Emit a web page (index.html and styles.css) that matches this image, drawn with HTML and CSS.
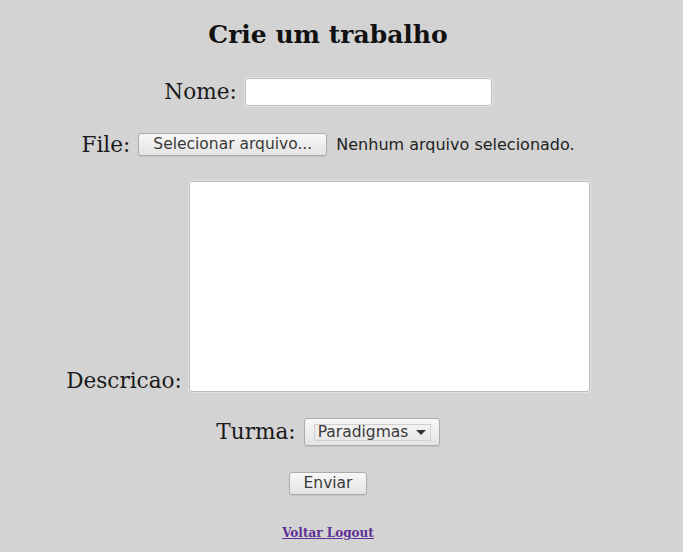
FILE: index.html
```html
<!DOCTYPE html>
<html lang="pt">
<head>
<meta charset="utf-8">
<title>Crie um trabalho</title>
<link rel="stylesheet" href="styles.css">
</head>
<body>
<main class="page">
  <h1 class="title">Crie um trabalho</h1>
  <form class="form">
    <div class="row row-nome">
      <label class="label" for="nome">Nome:</label>
      <input class="text-input" id="nome" type="text">
    </div>
    <div class="row row-file">
      <span class="label">File:</span>
      <button type="button" class="btn btn-file">Selecionar arquivo...</button>
      <span class="file-status">Nenhum arquivo selecionado.</span>
    </div>
    <div class="row row-desc">
      <label class="label" for="desc">Descricao:</label>
      <textarea class="textarea" id="desc"></textarea>
    </div>
    <div class="row row-turma">
      <label class="label" for="turma">Turma:</label>
      <span class="select-wrap">
        <select class="select" id="turma">
          <option>Paradigmas</option>
        </select>
      </span>
    </div>
    <div class="row row-submit">
      <button type="submit" class="btn btn-submit">Enviar</button>
    </div>
  </form>
  <div class="links"><a class="link" href="#">Voltar </a><a class="link" href="#">Logout</a></div>
</main>
</body>
</html>
```

FILE: styles.css
```css
html, body {
  margin: 0;
  padding: 0;
  background: #d3d3d3;
}

body {
  font-family: "DejaVu Serif", serif;
  color: #1a1a1a;
}

.page {
  width: 640px;
  margin-left: 8px;
  padding-top: 21px;
}

.title {
  margin: 0;
  font-size: 25px;
  line-height: 28px;
  font-weight: bold;
  text-align: center;
  color: #111;
}

.form {
  display: flex;
  flex-direction: column;
  margin-top: 29px;
}

.row {
  display: flex;
  justify-content: center;
  align-items: center;
  gap: 8px;
}

.label {
  font-family: "DejaVu Serif", serif;
  font-size: 21.6px;
  line-height: 1;
  color: #1a1a1a;
}

.text-input {
  box-sizing: border-box;
  width: 247px;
  height: 28px;
  margin: 0;
  border: 1px solid #bcbcbc;
  border-radius: 3px;
  box-shadow: 0 0 0 1px #e2e2e2;
  background: #fff;
  outline: none;
}

.row-file {
  margin-top: 27px;
}

.btn {
  box-sizing: border-box;
  height: 23px;
  margin: 0;
  padding: 0 8px;
  font-family: "DejaVu Sans", sans-serif;
  font-size: 15.5px;
  line-height: 21px;
  color: #3a3a3a;
  border: 1px solid #ababab;
  border-radius: 3px;
  background: linear-gradient(#f7f7f7, #e4e4e4);
  box-shadow: 0 1px 0 rgba(0,0,0,0.08);
}

.btn-file {
  width: 189px;
  padding: 0;
}

.file-status {
  margin-left: 1px;
  font-family: "DejaVu Sans", sans-serif;
  font-size: 16px;
  color: #222;
}

.row-desc {
  margin-top: 25px;
  align-items: flex-end;
  gap: 7px;
}

.textarea {
  box-sizing: border-box;
  width: 401px;
  height: 211px;
  margin: 0;
  border: 1px solid #bcbcbc;
  border-radius: 3px;
  box-shadow: 0 0 0 1px #e2e2e2;
  background: #fff;
  resize: none;
  outline: none;
}

.row-turma {
  margin-top: 26px;
}

.select-wrap {
  position: relative;
  box-sizing: border-box;
  display: inline-flex;
  align-items: center;
  width: 136px;
  height: 28px;
  padding: 0 8px 0 9px;
  border: 1px solid #ababab;
  border-radius: 3px;
  background: linear-gradient(#f7f7f7, #e4e4e4);
  box-shadow: 0 1px 0 rgba(0,0,0,0.08);
}

.select {
  -webkit-appearance: none;
  appearance: none;
  box-sizing: border-box;
  width: 118px;
  height: 17px;
  margin: 0;
  padding: 0 0 0 3px;
  font-family: "DejaVu Sans", sans-serif;
  font-size: 15.5px;
  line-height: 15px;
  color: #3a3a3a;
  border: 1px solid #cfcfcf;
  background: transparent;
  outline: none;
}

.select-wrap::after {
  content: "";
  position: absolute;
  left: 111px;
  top: 11px;
  width: 0;
  height: 0;
  border-left: 5.5px solid transparent;
  border-right: 5.5px solid transparent;
  border-top: 5px solid #333;
  pointer-events: none;
}

.row-submit {
  margin-top: 26px;
}

.btn-submit {
  width: 78px;
  padding: 0;
}

.links {
  margin-top: 31px;
  text-align: center;
  font-size: 12px;
  font-weight: bold;
  line-height: 14px;
}

.link {
  color: #5e2f94;
}
```
